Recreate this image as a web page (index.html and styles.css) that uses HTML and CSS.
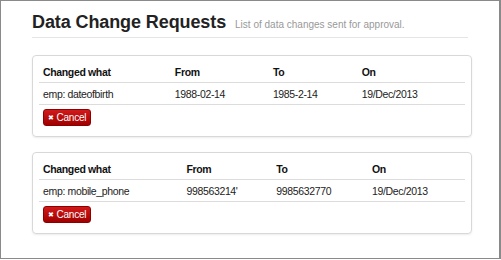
FILE: index.html
```html
<!DOCTYPE html>
<html lang="en">
<head>
  <meta charset="UTF-8">
  <title>Data Change Requests</title>
  <link rel="stylesheet" href="styles.css">
</head>
<body>
  <div class="frame">
    <div class="page-header">
      <h1>Data Change Requests</h1>
      <small>List of data changes sent for approval.</small>
    </div>

    <div class="request">
      <table class="changes">
        <tr>
          <th>Changed what</th>
          <th>From</th>
          <th>To</th>
          <th>On</th>
        </tr>
        <tr>
          <td>emp: dateofbirth</td>
          <td>1988-02-14</td>
          <td>1985-2-14</td>
          <td>19/Dec/2013</td>
        </tr>
      </table>
      <button class="btn-cancel" type="button"><span class="x">&#10006;</span> Cancel</button>
    </div>

    <div class="request">
      <table class="changes">
        <tr>
          <th>Changed what</th>
          <th>From</th>
          <th>To</th>
          <th>On</th>
        </tr>
        <tr>
          <td>emp: mobile_phone</td>
          <td>998563214'</td>
          <td>9985632770</td>
          <td>19/Dec/2013</td>
        </tr>
      </table>
      <button class="btn-cancel" type="button"><span class="x">&#10006;</span> Cancel</button>
    </div>
  </div>
</body>
</html>
```

FILE: styles.css
```css
body {
  margin: 0;
  font-family: "Liberation Sans", Arial, sans-serif;
  color: #333;
  background-color: #fff;
}
.frame {
  box-sizing: border-box;
  width: 501px;
  height: 259px;
  border: 1px solid #8a8a8a;
  border-right-width: 2px;
  padding: 10px 0 0 31px;
}
.page-header {
  width: 436px;
  padding-bottom: 3px;
  border-bottom: 1px solid #e5e5e5;
  display: flex;
  align-items: baseline;
}
h1 {
  margin: 0;
  font-size: 18px;
  line-height: 23px;
  font-weight: bold;
  letter-spacing: -0.1px;
  color: #222;
}
.page-header small {
  margin-left: 9px;
  font-size: 10px;
  color: #999;
}
.request {
  box-sizing: border-box;
  width: 440px;
  margin-top: 17px;
  padding: 5px 6px 10px 6px;
  border: 1px solid #d8d8d8;
  border-radius: 4px;
  box-shadow: 0 1px 2px rgba(0, 0, 0, 0.08);
}
.request + .request {
  margin-top: 15px;
}
.changes {
  width: 100%;
  border-collapse: collapse;
  font-size: 10.5px;
  letter-spacing: -0.35px;
}
.changes th,
.changes td {
  text-align: left;
  padding: 0 4px;
  height: 21px;
  border-bottom: 1px solid #dcdcdc;
}
.changes th {
  font-weight: bold;
  color: #111;
}
.changes td {
  color: #222;
}
.btn-cancel {
  margin: 4px 0 0 4px;
  height: 17px;
  padding: 0 4px;
  font-family: "Liberation Sans", Arial, sans-serif;
  font-size: 10px;
  letter-spacing: -0.2px;
  color: #fff;
  background: linear-gradient(#d21a1a, #a00000);
  border: 1px solid #8e0000;
  border-radius: 3px;
  cursor: pointer;
}
.btn-cancel .x {
  font-size: 7px;
  vertical-align: 1px;
}
```
